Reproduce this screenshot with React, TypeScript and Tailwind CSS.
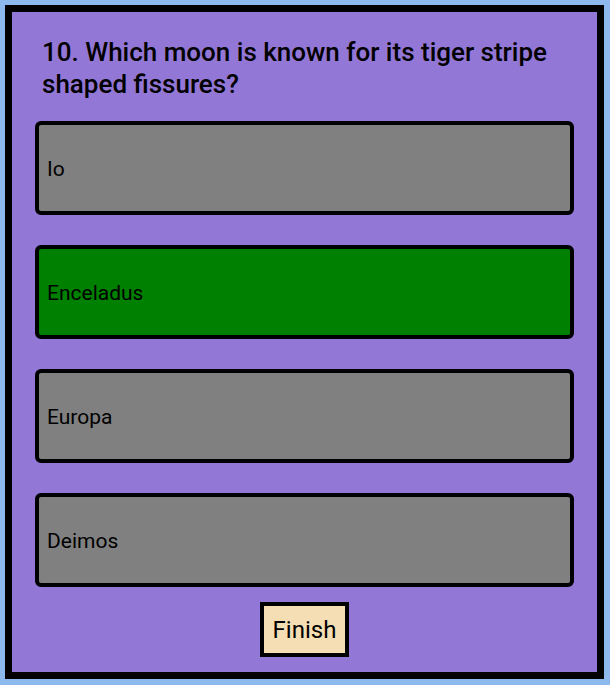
import React from "react";

const options = [
  { label: "Io", bg: "bg-[#808080]" },
  { label: "Enceladus", bg: "bg-[#008000]" },
  { label: "Europa", bg: "bg-[#808080]" },
  { label: "Deimos", bg: "bg-[#808080]" },
];

export default function App() {
  return (
    <div
      className="min-h-[685px] w-[610px] bg-[#8db9ef] p-[5px]"
      style={{ fontFamily: "Roboto, 'Noto Sans', sans-serif" }}
    >
      <div className="flex h-[674px] w-[599px] flex-col border-[7px] border-black bg-[#9377d6] px-[23px]">
        <h2 className="mt-[24px] px-[7px] text-[26px] font-medium leading-[32px] text-black">
          10. Which moon is known for its tiger stripe shaped fissures?
        </h2>
        <div className="mt-[21px] flex flex-col gap-[30px]">
          {options.map((o) => (
            <div
              key={o.label}
              className={`flex h-[94px] items-center rounded-[6px] border-4 border-black ${o.bg} px-[8px] pt-[3px] text-[21px] text-black`}
            >
              {o.label}
            </div>
          ))}
        </div>
        <div className="mt-[15px] flex justify-center">
          <div className="flex h-[55px] w-[89px] items-center justify-center border-4 border-black bg-[#f5deb3] text-[24px] text-black">
            Finish
          </div>
        </div>
      </div>
    </div>
  );
}
